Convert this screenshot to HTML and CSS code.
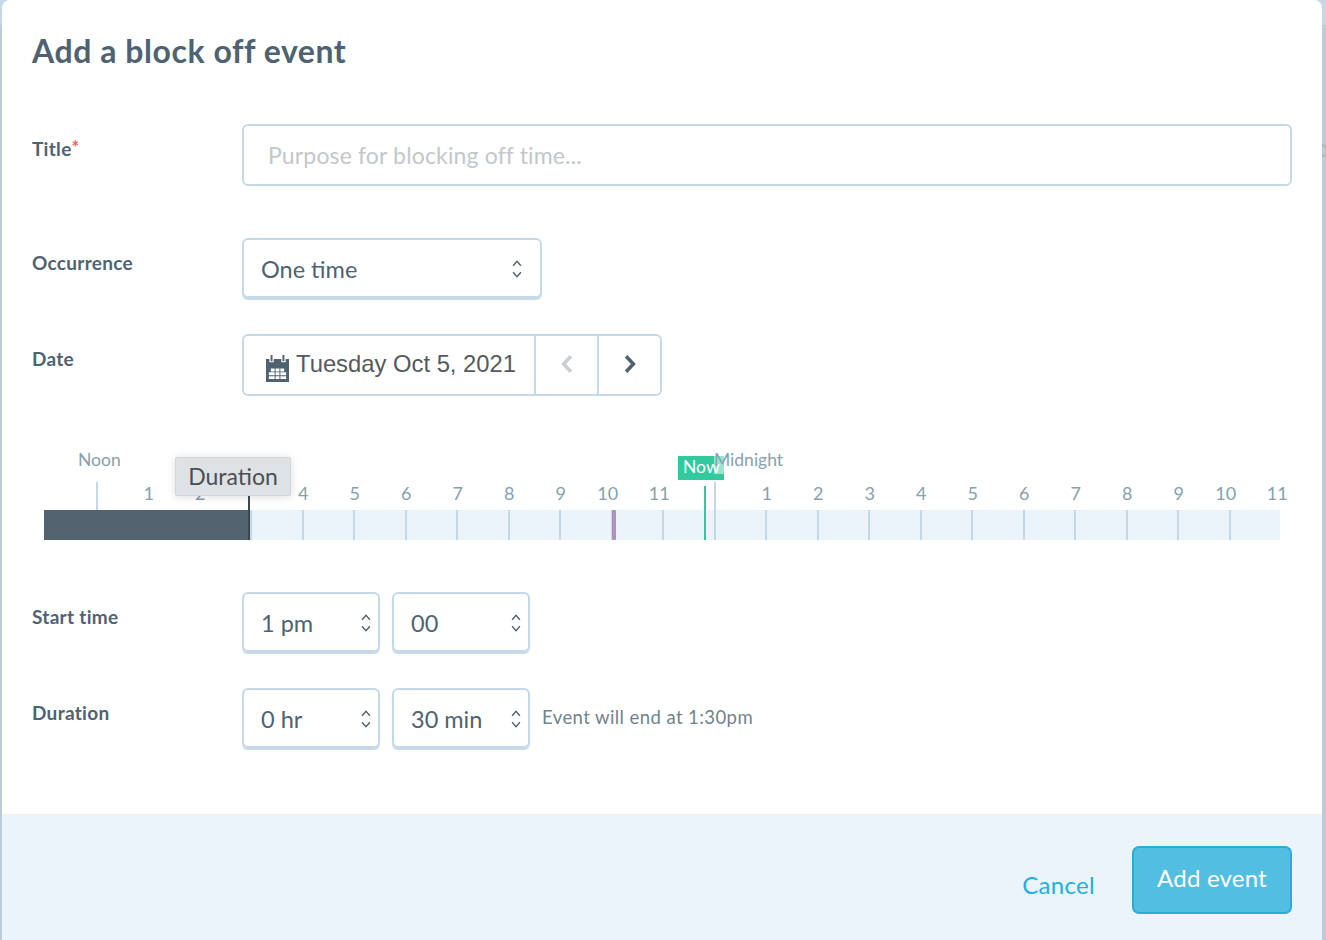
FILE: index.html
```html
<!DOCTYPE html>
<html lang="en">
<head>
<meta charset="utf-8">
<title>Add a block off event</title>
<link rel="stylesheet" href="styles.css">
</head>
<body>
<i class="backdrop-arc"></i>
<main class="modal">
  <div class="content">
    <h1 class="heading">Add a block off event</h1>
    <div class="row row-title">
      <label class="label">Title<span class="req">*</span></label>
      <div class="text-input">Purpose for blocking off time...</div>
    </div>
    <div class="row row-occurrence">
      <label class="label">Occurrence</label>
      <div class="select select-wide"><span>One time</span><svg class="updown" viewBox="0 0 10 18"><path d="M1.500 6 5 2l3.500 4M1.500 12 5 16l3.500-4"/></svg></div>
    </div>
    <div class="row row-date">
      <label class="label">Date</label>
      <div class="datepicker">
        <div class="date-main">
          <svg class="cal" viewBox="0 0 24 28"><path d="M0 4h3.500v3.500h4.500V4h8v3.500h4.500V4H24v24H0z"/><path d="M4.800 0h2v6.500h-2zM17.200 0h2v6.500h-2z"/><path class="cal-cells" d="M5 14h4v3H5zM10 14h4v3h-4zM15 14h4v3h-4zM3 18h6v3H3zM10 18h4v3h-4zM15 18h6v3h-6zM3 22h6v3H3zM10 22h4v3h-4zM15 22h6v3h-6z"/></svg>
          <span class="date-text">Tuesday Oct 5, 2021</span>
        </div>
        <div class="date-nav"><svg class="chev chev-off" viewBox="0 0 12 18"><path d="M9.500 2 3 9l6.500 7"/></svg></div>
        <div class="date-nav"><svg class="chev" viewBox="0 0 12 18"><path d="M2.500 2 9 9l-6.500 7"/></svg></div>
      </div>
    </div>
    <section class="timeline">
      <div class="hours">
        <span class="hour"></span><span class="hour">1</span><span class="hour">2</span><span class="hour"></span><span class="hour">4</span><span class="hour">5</span><span class="hour">6</span><span class="hour">7</span><span class="hour">8</span><span class="hour">9</span><span class="hour hour-wide">10</span><span class="hour hour-wide">11</span><span class="hour"></span><span class="hour">1</span><span class="hour">2</span><span class="hour">3</span><span class="hour">4</span><span class="hour">5</span><span class="hour">6</span><span class="hour">7</span><span class="hour">8</span><span class="hour">9</span><span class="hour hour-wide">10</span><span class="hour hour-wide">11</span>
      </div>
      <div class="track">
        <i class="tick"></i><i class="tick"></i><i class="tick"></i><i class="tick"></i><i class="tick"></i><i class="tick"></i><i class="tick"></i><i class="tick"></i><i class="tick"></i><i class="tick"></i><i class="tick"></i><i class="tick"></i><i class="tick"></i><i class="tick"></i><i class="tick"></i><i class="tick"></i><i class="tick"></i><i class="tick"></i><i class="tick"></i><i class="tick"></i><i class="tick"></i><i class="tick"></i>
      </div>
      <span class="noon">Noon</span>
      <i class="tick-tall tick-noon"></i>
      <div class="selection"></div>
      <div class="busy"></div>
      <div class="now-tag">Now</div>
      <i class="now-line"></i>
      <span class="midnight">Midnight</span>
      <i class="tick-tall tick-midnight"></i>
      <div class="tooltip">Duration</div>
      <i class="selection-end"></i>
    </section>
    <div class="row row-start">
      <label class="label">Start time</label>
      <div class="select select-small"><span>1 pm</span><svg class="updown" viewBox="0 0 10 18"><path d="M1.500 6 5 2l3.500 4M1.500 12 5 16l3.500-4"/></svg></div>
      <div class="select select-small"><span>00</span><svg class="updown" viewBox="0 0 10 18"><path d="M1.500 6 5 2l3.500 4M1.500 12 5 16l3.500-4"/></svg></div>
    </div>
    <div class="row row-duration">
      <label class="label">Duration</label>
      <div class="select select-small"><span>0 hr</span><svg class="updown" viewBox="0 0 10 18"><path d="M1.500 6 5 2l3.500 4M1.500 12 5 16l3.500-4"/></svg></div>
      <div class="select select-small"><span>30 min</span><svg class="updown" viewBox="0 0 10 18"><path d="M1.500 6 5 2l3.500 4M1.500 12 5 16l3.500-4"/></svg></div>
      <span class="hint">Event will end at 1:30pm</span>
    </div>
  </div>
  <footer class="footer">
    <a class="cancel">Cancel</a>
    <button class="primary">Add event</button>
  </footer>
</main>
</body>
</html>
```
FILE: styles.css
```css
* { box-sizing: border-box; }
html, body { margin: 0; height: 100%; }
body {
  position: relative;
  width: 1326px;
  height: 940px;
  overflow: hidden;
  padding: 0 4px 0 2px;
  background: linear-gradient(#c6d8e7 0 25px, #bccbd9 25px);
  font-family: "Lato", "Liberation Sans", sans-serif;
  color: #4f6272;
}
.backdrop-arc {
  position: absolute;
  left: 1316px;
  top: 144px;
  width: 12px;
  height: 13px;
  border: 2px solid #a9b5bf;
  border-radius: 50%;
}
.modal {
  position: relative;
  height: 940px;
  background: #fff;
  border-radius: 8px 8px 0 0;
  display: flex;
  flex-direction: column;
}
.content { flex: 1; padding: 0 30px; }
.heading {
  margin: 0;
  padding-top: 32px;
  height: 124px;
  font-size: 32px;
  line-height: 37px;
  font-weight: 700;
  letter-spacing: .55px;
  color: #4f6272;
}
.row { display: flex; align-items: flex-start; gap: 12px; }
.label {
  flex: none;
  width: 198px;
  padding-top: 14px;
  font-size: 19px;
  line-height: 22px;
  font-weight: 700;
  letter-spacing: .3px;
  color: #4f6272;
}
.req { color: #f0635f; font-size: 18px; line-height: 1; vertical-align: 2px; }
.row-occurrence { margin-top: 52px; }
.row-date { margin-top: 36px; }
.row-start { margin-top: 52px; }
.row-duration { margin-top: 36px; }
.text-input {
  flex: 1;
  height: 62px;
  border: 2px solid #c5d8e8;
  border-radius: 6px;
  padding: 0 24px;
  font-size: 23px;
  line-height: 58px;
  letter-spacing: .15px;
  color: #c3c7ca;
}
.select {
  height: 60px;
  border: 2px solid #c5d8e8;
  border-radius: 6px;
  box-shadow: 0 2px 1px #c5d8e8;
  display: flex;
  align-items: center;
  justify-content: space-between;
  padding: 2px 6px 0 17px;
  font-size: 23.500px;
  color: #4f6272;
}
.select-wide { width: 300px; padding-right: 17px; }
.select-small { width: 138px; }
.updown { width: 12px; height: 20px; flex: none; }
.updown path { fill: none; stroke: #4f6272; stroke-width: 1.300; }
.hint { font-size: 18.500px; line-height: 58px; letter-spacing: .42px; color: #71838f; }
.datepicker {
  width: 420px;
  height: 62px;
  border: 2px solid #c5d8e8;
  border-radius: 6px;
  display: flex;
}
.date-main {
  width: 290px;
  display: flex;
  align-items: center;
  padding-left: 22px;
  gap: 7px;
}
.cal { width: 23px; height: 27px; margin-top: 6px; fill: #4f6272; flex: none; }
.cal-cells { fill: #fff; }
.date-text {
  font-family: "Liberation Sans", Arial, sans-serif;
  font-size: 23.800px;
  color: #555a5e;
  margin-top: -2px;
}
.date-nav {
  flex: 1;
  border-left: 2px solid #c5d8e8;
  display: flex;
  align-items: center;
  justify-content: center;
}
.chev { width: 14px; height: 20px; margin-top: -2px; }
.chev path { fill: none; stroke: #4f6272; stroke-width: 3.200; }
.chev-off path { stroke: #c9cfd3; }
.timeline {
  position: relative;
  margin: 38px 0 0 12px;
  height: 106px;
  width: 1236px;
  padding-top: 49px;
}
.hours {
  display: flex;
  margin-left: 27.500px;
  height: 27px;
}
.hour {
  flex: 0 0 51.500px;
  text-align: center;
  font-size: 18px;
  line-height: 20px;
  color: #86a1ae;
}
.hour-wide { padding-right: 9px; }
.track {
  height: 30px;
  background: #ebf4fb;
  display: flex;
  padding-left: 103px;
}
.tick { flex: 0 0 51.500px; border-left: 2px solid #c5d8e8; }
.noon, .midnight {
  position: absolute;
  font-size: 17.500px;
  line-height: 22px;
  color: #86a1ae;
  top: 15px;
}
.noon { left: 34px; }
.midnight {
  left: 670px;
  padding-bottom: 3px;
  background: linear-gradient(90deg, rgba(255,255,255,.5) 10px, transparent 10px);
}
.tick-tall { position: absolute; width: 2px; top: 48px; height: 28px; background: #c5d8e8; }
.tick-noon { left: 52px; }
.tick-midnight { left: 670px; height: 58px; }
.selection { position: absolute; left: 0; top: 76px; width: 205px; height: 30px; background: #52626f; }
.selection-end { position: absolute; left: 204px; top: 62px; width: 2px; height: 44px; background: #3a4650; }
.busy { position: absolute; left: 568px; top: 76px; width: 4px; height: 30px; background: #b08fc0; border-radius: 1px; }
.now-tag {
  position: absolute;
  left: 634px;
  top: 22px;
  width: 46px;
  height: 24px;
  padding-left: 5px;
  background: #33c99f;
  color: #fff;
  font-size: 17.500px;
  line-height: 22px;
}
.now-line { position: absolute; left: 660px; top: 52px; width: 2px; height: 54px; background: #33c99f; }
.tooltip {
  position: absolute;
  left: 131px;
  top: 23px;
  width: 116px;
  height: 39px;
  background: #dfe2e5;
  border: 1px solid #d4d7da;
  border-radius: 2px;
  box-shadow: 0 1px 8px rgba(0,0,0,.14);
  text-align: center;
  font-size: 23px;
  line-height: 37px;
  color: #4a4f54;
}
.footer {
  height: 126px;
  background: #ecf4fb;
  border-top: 2px solid #f0f2f4;
  display: flex;
  justify-content: flex-end;
  align-items: flex-start;
  padding: 30px 30px 0 0;
  gap: 37px;
}
.cancel { margin-top: 24px; font-size: 24px; line-height: 30px; letter-spacing: .3px; color: #1fb0dc; }
.primary {
  width: 160px;
  height: 68px;
  background: #52bee2;
  border: 2px solid #29aed9;
  border-radius: 7px;
  color: #fff;
  font-family: inherit;
  font-size: 24px;
  letter-spacing: .2px;
  padding: 0 0 6px;
}
```
